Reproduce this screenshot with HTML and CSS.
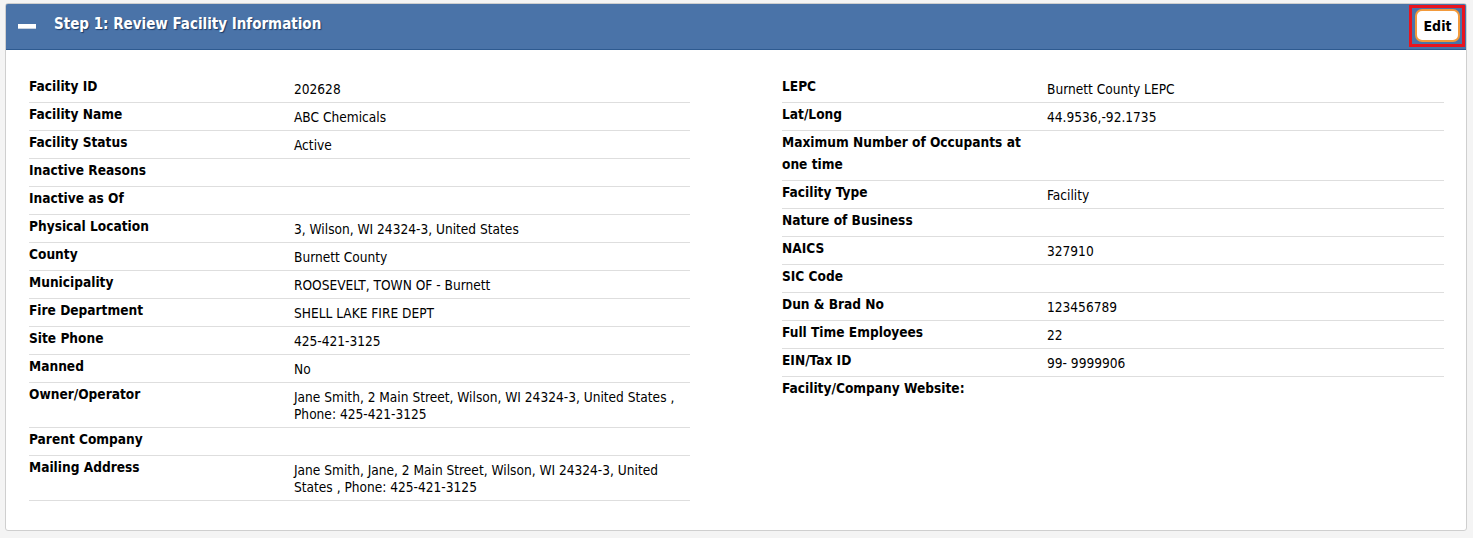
FILE: index.html
```html
<!DOCTYPE html>
<html>
<head>
<meta charset="utf-8">
<link rel="stylesheet" href="styles.css">
</head>
<body>
<div class="panel">
  <div class="panel-header">
    <span class="collapse-icon"></span>
    <h2 class="panel-title">Step 1: Review Facility Information</h2>
    <div class="edit-highlight"><button class="edit-btn">Edit</button></div>
  </div>
  <div class="panel-body">
    <div class="info-col">
      <div class="row"><div class="lbl">Facility ID</div><div class="val">202628</div></div>
      <div class="row"><div class="lbl">Facility Name</div><div class="val">ABC Chemicals</div></div>
      <div class="row"><div class="lbl">Facility Status</div><div class="val">Active</div></div>
      <div class="row"><div class="lbl">Inactive Reasons</div><div class="val"></div></div>
      <div class="row"><div class="lbl">Inactive as Of</div><div class="val"></div></div>
      <div class="row"><div class="lbl">Physical Location</div><div class="val">3, Wilson, WI 24324-3, United States</div></div>
      <div class="row"><div class="lbl">County</div><div class="val">Burnett County</div></div>
      <div class="row"><div class="lbl">Municipality</div><div class="val">ROOSEVELT, TOWN OF - Burnett</div></div>
      <div class="row"><div class="lbl">Fire Department</div><div class="val">SHELL LAKE FIRE DEPT</div></div>
      <div class="row"><div class="lbl">Site Phone</div><div class="val">425-421-3125</div></div>
      <div class="row"><div class="lbl">Manned</div><div class="val">No</div></div>
      <div class="row"><div class="lbl">Owner/Operator</div><div class="val">Jane Smith, 2 Main Street, Wilson, WI 24324-3, United States , Phone: 425-421-3125</div></div>
      <div class="row"><div class="lbl">Parent Company</div><div class="val"></div></div>
      <div class="row"><div class="lbl">Mailing Address</div><div class="val">Jane Smith, Jane, 2 Main Street, Wilson, WI 24324-3, United States , Phone: 425-421-3125</div></div>
    </div>
    <div class="info-col">
      <div class="row"><div class="lbl">LEPC</div><div class="val">Burnett County LEPC</div></div>
      <div class="row"><div class="lbl">Lat/Long</div><div class="val">44.9536,-92.1735</div></div>
      <div class="row"><div class="lbl">Maximum Number of Occupants at one time</div><div class="val"></div></div>
      <div class="row"><div class="lbl">Facility Type</div><div class="val">Facility</div></div>
      <div class="row"><div class="lbl">Nature of Business</div><div class="val"></div></div>
      <div class="row"><div class="lbl">NAICS</div><div class="val">327910</div></div>
      <div class="row"><div class="lbl">SIC Code</div><div class="val"></div></div>
      <div class="row"><div class="lbl">Dun &amp; Brad No</div><div class="val">123456789</div></div>
      <div class="row"><div class="lbl">Full Time Employees</div><div class="val">22</div></div>
      <div class="row"><div class="lbl">EIN/Tax ID</div><div class="val">99- 9999906</div></div>
      <div class="row last"><div class="lbl">Facility/Company Website:</div><div class="val"></div></div>
    </div>
  </div>
</div>
</body>
</html>
```
FILE: styles.css
```css
html, body {
  margin: 0;
  padding: 0;
  background: #f4f4f4;
}
body {
  padding: 3px 6px 0 5px;
  font-family: "DejaVu Sans Condensed", "DejaVu Sans", sans-serif;
  color: #000;
}
.panel {
  background: #fff;
  border: 1px solid #cfcfcf;
  border-radius: 3px;
  height: 528px;
  box-sizing: border-box;
  overflow: hidden;
}
.panel-header {
  background: #4a73a8;
  border: 1px solid #2e5a90;
  border-radius: 3px 3px 0 0;
  height: 47px;
  box-sizing: border-box;
  margin: -1px -1px 0 -1px;
  display: flex;
  align-items: flex-start;
  padding: 1px 1px 0 12px;
}
.collapse-icon {
  width: 18px;
  height: 4px;
  background: #fff;
  border-bottom: 1px solid #c8d2e0;
  margin-top: 19px;
  margin-right: 18px;
}
.panel-title {
  margin: 9px 0 0 0;
  flex: 1;
  color: #fff;
  font-family: "DejaVu Sans Condensed", "DejaVu Sans", sans-serif;
  font-weight: bold;
  font-size: 15px;
  line-height: 20px;
  text-shadow: 1px 1px 1px #1d3b66;
}
.edit-highlight {
  border: 3px solid #e8141f;
  padding: 1px 2px 2px 3px;
  height: 42px;
  box-sizing: border-box;
  display: flex;
}
.edit-btn {
  background: #fff;
  border: 2px solid #f39a3b;
  border-radius: 7px;
  font-family: "DejaVu Sans Condensed", "DejaVu Sans", sans-serif;
  font-weight: bold;
  font-size: 14px;
  color: #000;
  width: 45px;
  padding: 0;
  height: 33px;
}
.panel-body {
  display: grid;
  grid-template-columns: 661px 662px;
  column-gap: 92px;
  padding: 25px 0 0 23px;
}
.row {
  display: grid;
  grid-template-columns: 265px 1fr;
  border-bottom: 1px solid #dedede;
}
.row.last {
  border-bottom: none;
}
.lbl {
  font-family: "DejaVu Sans Condensed", "DejaVu Sans", sans-serif;
  font-weight: bold;
  font-size: 13.6px;
  line-height: 22px;
  padding: 0 10px 5px 0;
}
.val {
  font-size: 13.6px;
  line-height: 17px;
  padding: 6px 12px 4px 0;
}
```
